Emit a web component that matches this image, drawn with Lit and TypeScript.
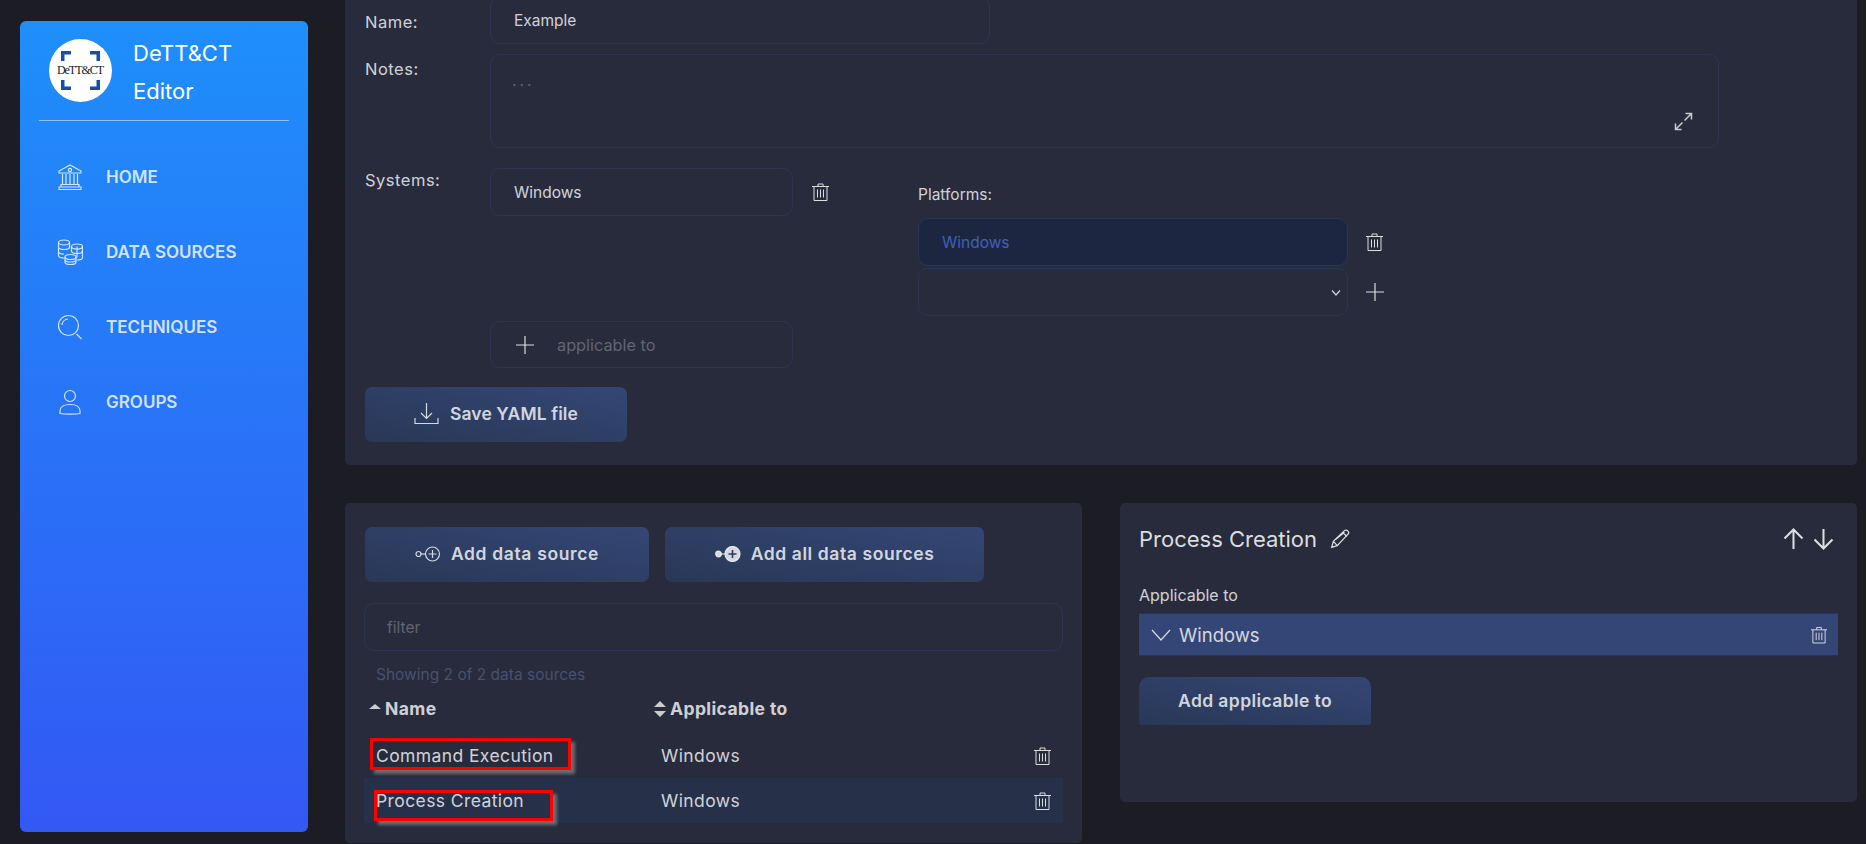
import { LitElement, css, html, svg } from "lit";
import { customElement } from "lit/decorators.js";

const trash = html`<svg class="trash" viewBox="0 0 17 18" fill="none" stroke="currentColor" stroke-width="1">
  <path d="M0 3.5h17M6 3.5V1h5v2.5M2 3.5v14h13v-14M5.500 6.500v8M8.500 6.500v8M11.500 6.500v8" />
</svg>`;

const plus = html`<svg class="plus" viewBox="0 0 18 18" fill="none" stroke="currentColor" stroke-width="1.2">
  <path d="M9 0v18M0 9h18" />
</svg>`;

const navIcons = {
  bank: svg`<path d="M13 1 2 7v2h22V7L13 1ZM2 23h22v2.500H2ZM4 20.500h18V23H4ZM5.500 10v10.500M9 10v10.500M13 10v10.500M17 10v10.500M20.500 10v10.500" /><circle cx="13" cy="6" r="1.600" />`,
  coins: svg`<ellipse cx="7" cy="3.500" rx="5.500" ry="2.500" /><path d="M1.500 3.500v13c0 1.400 2.400 2.500 5.500 2.500M12.500 3.500v6M1.500 8c0 1.400 2.400 2.500 5.500 2.500s5.500-1.100 5.500-2.500M1.500 12.500c0 1.400 2.400 2.500 5.500 2.500M20 7.500v11M25.500 7.500v11c0 1.400-2.400 2.500-5.500 2.500" /><ellipse cx="20" cy="7.500" rx="5.500" ry="2.500" /><path d="M14.500 7.500v5M14.500 12c0 1.400 2.400 2.500 5.500 2.500s5.500-1.100 5.500-2.500" /><ellipse cx="13.500" cy="18" rx="5.500" ry="2.500" /><path d="M8 18v5c0 1.400 2.400 2.500 5.500 2.500S19 24.400 19 23v-5M8 20.500c0 1.400 2.400 2.500 5.500 2.500s5.500-1.100 5.500-2.500" />`,
  search: svg`<circle cx="11.500" cy="11.500" r="10" /><path d="M5 11a6.500 6.500 0 0 1 6-6M19.500 20l5 5" />`,
  user: svg`<circle cx="13" cy="7" r="5.500" /><path d="M3 24.500v-2.500c0-4 4-6.500 10-6.500s10 2.500 10 6.500v2.500c-3 .8-17 .8-20 0Z" />`,
};

const navItems = [
  { label: "HOME", icon: navIcons.bank },
  { label: "DATA SOURCES", icon: navIcons.coins },
  { label: "TECHNIQUES", icon: navIcons.search },
  { label: "GROUPS", icon: navIcons.user },
];

@customElement("app-root")
export class AppRoot extends LitElement {
  static styles = css`
    :host {
      display: flex;
      height: 844px;
      overflow: hidden;
      background: #1b1c24;
      color: rgba(255, 255, 255, 0.8);
      font-family: Inter, "Open Sans", sans-serif;
      font-size: 15px;
    }

    * {
      box-sizing: border-box;
    }

    .sidebar {
      flex: none;
      width: 288px;
      height: 811px;
      margin: 21px 37px 0 20px;
      border-radius: 6px;
      background: linear-gradient(#1e8ffb, #3358f4);
    }

    .brand {
      display: flex;
      align-items: center;
      gap: 21px;
      height: 100px;
      margin: 0 19px;
      padding: 0 10px;
      border-bottom: 1px solid rgba(255, 255, 255, 0.5);
      color: #fff;
      font-size: 22px;
      line-height: 38px;
    }

    .brand div {
      padding-top: 3px;
    }

    .logo {
      flex: none;
      width: 63px;
      height: 63px;
    }

    .logo text {
      font-family: "Liberation Serif", serif;
      font-size: 12px;
    }

    nav {
      display: flex;
      flex-direction: column;
      padding-top: 18px;
    }

    nav a {
      display: flex;
      align-items: center;
      gap: 23px;
      height: 75px;
      padding-left: 37px;
      color: rgba(255, 255, 255, 0.8);
      font-size: 17px;
      font-weight: 600;
    }

    nav svg {
      width: 26px;
      height: 26px;
      fill: none;
      stroke: currentColor;
      stroke-width: 1.2;
    }

    .main {
      flex: 1;
      min-width: 0;
      display: flex;
      flex-direction: column;
      justify-content: flex-end;
      gap: 38px;
      padding: 0 9px 1px 0;
      overflow: hidden;
    }

    .card {
      flex: none;
      background: #282b3c;
      border-radius: 5px;
    }

    .top {
      padding: 0 20px 23px;
    }

    .row {
      display: flex;
      margin-bottom: 10px;
    }

    .row > label {
      flex: none;
      width: 125px;
      padding-top: 5px;
      font-size: 16.5px;
      letter-spacing: 0.5px;
      line-height: 20px;
    }

    .name-row > label {
      padding-top: 16px;
    }

    .systems > label {
      padding-top: 2px;
    }

    input,
    textarea,
    .select {
      display: block;
      height: 48px;
      padding: 0 23px;
      border: 1px solid #2b3553;
      border-radius: 10px;
      outline: none;
      background: transparent;
      color: rgba(255, 255, 255, 0.8);
      font: inherit;
      font-size: 15.5px;
    }

    input::placeholder,
    textarea::placeholder {
      color: #62656f;
    }

    .name-row input {
      width: 500px;
    }

    .notes {
      position: relative;
      width: 1229px;
      height: 94px;
    }

    textarea {
      width: 100%;
      height: 100%;
      padding-top: 16px;
      padding-left: 21px;
      resize: none;
      letter-spacing: 3px;
    }

    .expand {
      position: absolute;
      right: 26px;
      bottom: 17px;
      width: 19px;
      height: 19px;
      color: #ccc;
    }

    .systems {
      margin: 20px 0 0;
    }

    .sys-input {
      width: 303px;
    }

    .sys-col {
      display: flex;
      align-items: flex-start;
      height: 148px;
    }

    .trash {
      flex: none;
      width: 17px;
      height: 18px;
      color: #ddd;
    }

    .sys-col > .trash {
      margin: 15px 0 0 19px;
    }

    .platforms {
      margin-left: 89px;
      padding-top: 16px;
      font-size: 15.5px;
    }

    .platform-row {
      display: flex;
      align-items: center;
      gap: 18px;
      margin-bottom: 2px;
      color: #ddd;
    }

    .platforms p {
      margin: 0 0 13px;
      line-height: 21px;
    }

    .platform-row input,
    .select {
      width: 430px;
      padding: 0 23px;
    }

    .platform-row input {
      background: #1d2640;
      color: #4160b8;
    }

    .select {
      position: relative;
    }

    .select svg {
      position: absolute;
      right: 6px;
      top: 20px;
      width: 10px;
      height: 8px;
    }

    .plus {
      flex: none;
      width: 18px;
      height: 18px;
      color: #ddd;
    }

    .add-row {
      display: flex;
      align-items: center;
      gap: 23px;
      width: 303px;
      height: 47px;
      margin: 5px 0 19px 125px;
      padding: 0 24px 0 25px;
      border: 1px solid #2b3553;
      border-radius: 10px;
      color: #62656f;
      font-size: 16.3px;
    }

    .btn {
      display: flex;
      align-items: center;
      justify-content: center;
      gap: 10px;
      flex: none;
      height: 55px;
      padding: 0 0 2px;
      border: 0;
      border-radius: 7px;
      background: linear-gradient(to bottom left, #344675, #293856);
      color: rgba(255, 255, 255, 0.8);
      font: inherit;
      font-size: 17.5px;
      font-weight: 600;
      letter-spacing: 0.4px;
    }

    .btn svg {
      flex: none;
      fill: none;
      stroke: currentColor;
    }

    .save {
      width: 262px;
      letter-spacing: 0.1px;
      gap: 11px;
    }

    .bottom {
      display: flex;
      flex: none;
      gap: 38px;
    }

    .sources {
      flex: none;
      width: 737px;
      height: 340px;
      padding: 24px 19px 0;
    }

    .actions {
      display: flex;
      gap: 16px;
      padding-left: 1px;
      margin-bottom: 21px;
    }

    .add-one {
      width: 284px;
      letter-spacing: 0.65px;
    }

    .add-all {
      width: 319px;
      letter-spacing: 0.6px;
    }

    .filter {
      width: 699px;
      padding-left: 22px;
    }

    .count {
      margin: 12px 0 2px 12px;
      height: 23px;
      color: #46526f;
      font-size: 15.5px;
      line-height: 23px;
    }

    .tr {
      position: relative;
      display: grid;
      grid-template-columns: 285px 1fr auto;
      align-items: center;
      width: 699px;
      height: 45px;
      padding: 0 12px 0 12px;
      font-size: 17.5px;
      letter-spacing: 0.4px;
    }

    .tr.head {
      height: 45px;
      font-weight: 700;
      transform: translateY(-2px);
    }

    .tr.selected {
      background: #263049;
    }

    .tr .sortable {
      display: flex;
      align-items: center;
      gap: 4px;
      margin-left: -7px;
    }

    .sortable svg {
      width: 12px;
      height: 16px;
      fill: #ccc;
    }

    .mark {
      position: absolute;
      border: 3px solid #f00;
      box-shadow: 4px 4px 3px rgba(130, 130, 130, 0.75);
    }

    .mark.a {
      left: 6px;
      top: 5px;
      width: 201px;
      height: 32px;
    }

    .mark.b {
      left: 10px;
      top: 12px;
      width: 179px;
      height: 31px;
    }

    .detail {
      flex: 1;
      height: 299px;
      padding: 0 19px;
    }

    .detail-head {
      display: flex;
      align-items: center;
      height: 72px;
      font-size: 22px;
      color: rgba(255, 255, 255, 0.85);
    }

    .detail-head .pencil {
      width: 20px;
      height: 20px;
      margin-left: 13px;
    }

    .arrows {
      display: flex;
      gap: 9px;
      margin: 0 4px 0 auto;
    }

    .arrows svg {
      width: 21px;
      height: 22px;
    }

    .detail-head svg {
      fill: none;
      stroke: currentColor;
    }

    .detail-label {
      margin-top: 7px;
      height: 31px;
      font-size: 16px;
      line-height: 27px;
    }

    .applicable {
      display: flex;
      align-items: center;
      gap: 8px;
      height: 43px;
      padding: 0 11px 0 12px;
      background: #344675;
      border-top: 1px solid #2b3553;
      border-bottom: 1px solid #2b3553;
      font-size: 18.5px;
    }

    .applicable .chev {
      width: 20px;
      height: 12px;
      fill: none;
      stroke: currentColor;
    }

    .applicable .trash {
      margin-left: auto;
      width: 16px;
    }

    .add-applicable {
      width: 232px;
      height: 48px;
      margin-top: 21px;
      border-radius: 10px 10px 3px 3px;
    }
  `;

  render() {
    return html`
      <aside class="sidebar">
        <div class="brand">
          <svg class="logo" viewBox="0 0 63 63">
            <circle cx="31.500" cy="31.500" r="31.500" fill="#fff" />
            <path
              d="M12 22V12h10v3.500h-6.500V22ZM41 12h10v10h-3.500v-6.500H41ZM12 41h3.500v6.500H22V51H12ZM47.500 41H51v10H41v-3.500h6.500Z"
              fill="#174fa8"
            />
            <text x="31.500" y="35" text-anchor="middle" textLength="47" fill="#222">DeTT&amp;CT</text>
          </svg>
          <div>DeTT&amp;CT<br />Editor</div>
        </div>
        <nav>
          ${navItems.map(
            (item) => html`<a><svg viewBox="0 0 26 26">${item.icon}</svg>${item.label}</a>`,
          )}
        </nav>
      </aside>

      <main class="main">
        <section class="card top">
          <div class="row name-row">
            <label>Name:</label>
            <input value="Example" />
          </div>
          <div class="row">
            <label>Notes:</label>
            <div class="notes">
              <textarea placeholder="..."></textarea>
              <svg class="expand" viewBox="0 0 19 19" fill="none" stroke="currentColor" stroke-width="1.500">
                <path d="M11.500 1.500h6v6M17.500 1.500l-7 7M7.500 17.500h-6v-6M1.500 17.500l7-7" />
              </svg>
            </div>
          </div>
          <div class="row systems">
            <label>Systems:</label>
            <div class="sys-col">
              <input class="sys-input" value="Windows" />
              ${trash}
              <div class="platforms">
                <p>Platforms:</p>
                <div class="platform-row"><input value="Windows" disabled />${trash}</div>
                <div class="platform-row">
                  <div class="select">
                    <svg viewBox="0 0 10 8" fill="none" stroke="#ccc" stroke-width="1.400">
                      <path d="M1 1.500 5 6l4-4.500" />
                    </svg>
                  </div>
                  ${plus}
                </div>
              </div>
            </div>
          </div>
          <div class="add-row">${plus}<span>applicable to</span></div>
          <button class="btn save">
            <svg width="25" height="23" viewBox="0 0 25 23" stroke-width="1.200">
              <path d="M12.500 1v15M7 11l5.500 5.500L18 11M1 16v5.500h23V16" />
            </svg>
            Save YAML file
          </button>
        </section>

        <div class="bottom">
          <section class="card sources">
            <div class="actions">
              <button class="btn add-one">
                <svg width="26" height="16" viewBox="0 0 26 16" stroke-width="1.200">
                  <circle cx="3.500" cy="8" r="2.500" />
                  <path d="M6 8h4" />
                  <circle cx="17.500" cy="8" r="7" />
                  <path d="M17.500 4v8M13.500 8h8" />
                </svg>
                Add data source
              </button>
              <button class="btn add-all">
                <svg width="26" height="16" viewBox="0 0 26 16" stroke-width="1.200">
                  <circle cx="3.500" cy="8" r="2.800" fill="currentColor" />
                  <path d="M6 8h4" />
                  <circle cx="17.500" cy="8" r="7.500" fill="currentColor" />
                  <path d="M17.500 4v8M13.500 8h8" stroke="#2c3a5e" stroke-width="1.600" />
                </svg>
                Add all data sources
              </button>
            </div>
            <input class="filter" placeholder="filter" />
            <div class="count">Showing 2 of 2 data sources</div>
            <div class="tr head">
              <div class="sortable">
                <svg viewBox="0 0 12 16"><path d="M6 3l6 5H0Z" /></svg>Name
              </div>
              <div class="sortable">
                <svg viewBox="0 0 12 16"><path d="M6 0l6 6H0ZM6 16l6-6H0Z" /></svg>Applicable to
              </div>
              <div></div>
            </div>
            <div class="tr">
              <div>Command Execution</div>
              <div>Windows</div>
              ${trash}
              <span class="mark a"></span>
            </div>
            <div class="tr selected">
              <div>Process Creation</div>
              <div>Windows</div>
              ${trash}
              <span class="mark b"></span>
            </div>
          </section>

          <section class="card detail" style="align-self: flex-start">
            <div class="detail-head">
              Process Creation
              <svg class="pencil" viewBox="0 0 18 18" stroke-width="1.100">
                <path d="M1.500 16.500 3 11 13 1.500c1-.8 2.500-.5 3.200.4.800.9.700 2.200-.2 3L6.500 15ZM3 11l3.500 4M11.500 3l3.700 3.700M5 9.500 13 3" />
              </svg>
              <div class="arrows">
                <svg viewBox="0 0 21 22" stroke-width="2"><path d="M10.500 21V1.500M1.500 10.500l9-9 9 9" /></svg>
                <svg viewBox="0 0 21 22" stroke-width="2"><path d="M10.500 1v19.500M1.500 11.500l9 9 9-9" /></svg>
              </div>
            </div>
            <div class="detail-label">Applicable to</div>
            <div class="applicable">
              <svg class="chev" viewBox="0 0 20 12" stroke-width="1.200"><path d="M1 1l9 10 9-10" /></svg>
              Windows ${trash}
            </div>
            <button class="btn add-applicable">Add applicable to</button>
          </section>
        </div>
      </main>
    `;
  }
}
